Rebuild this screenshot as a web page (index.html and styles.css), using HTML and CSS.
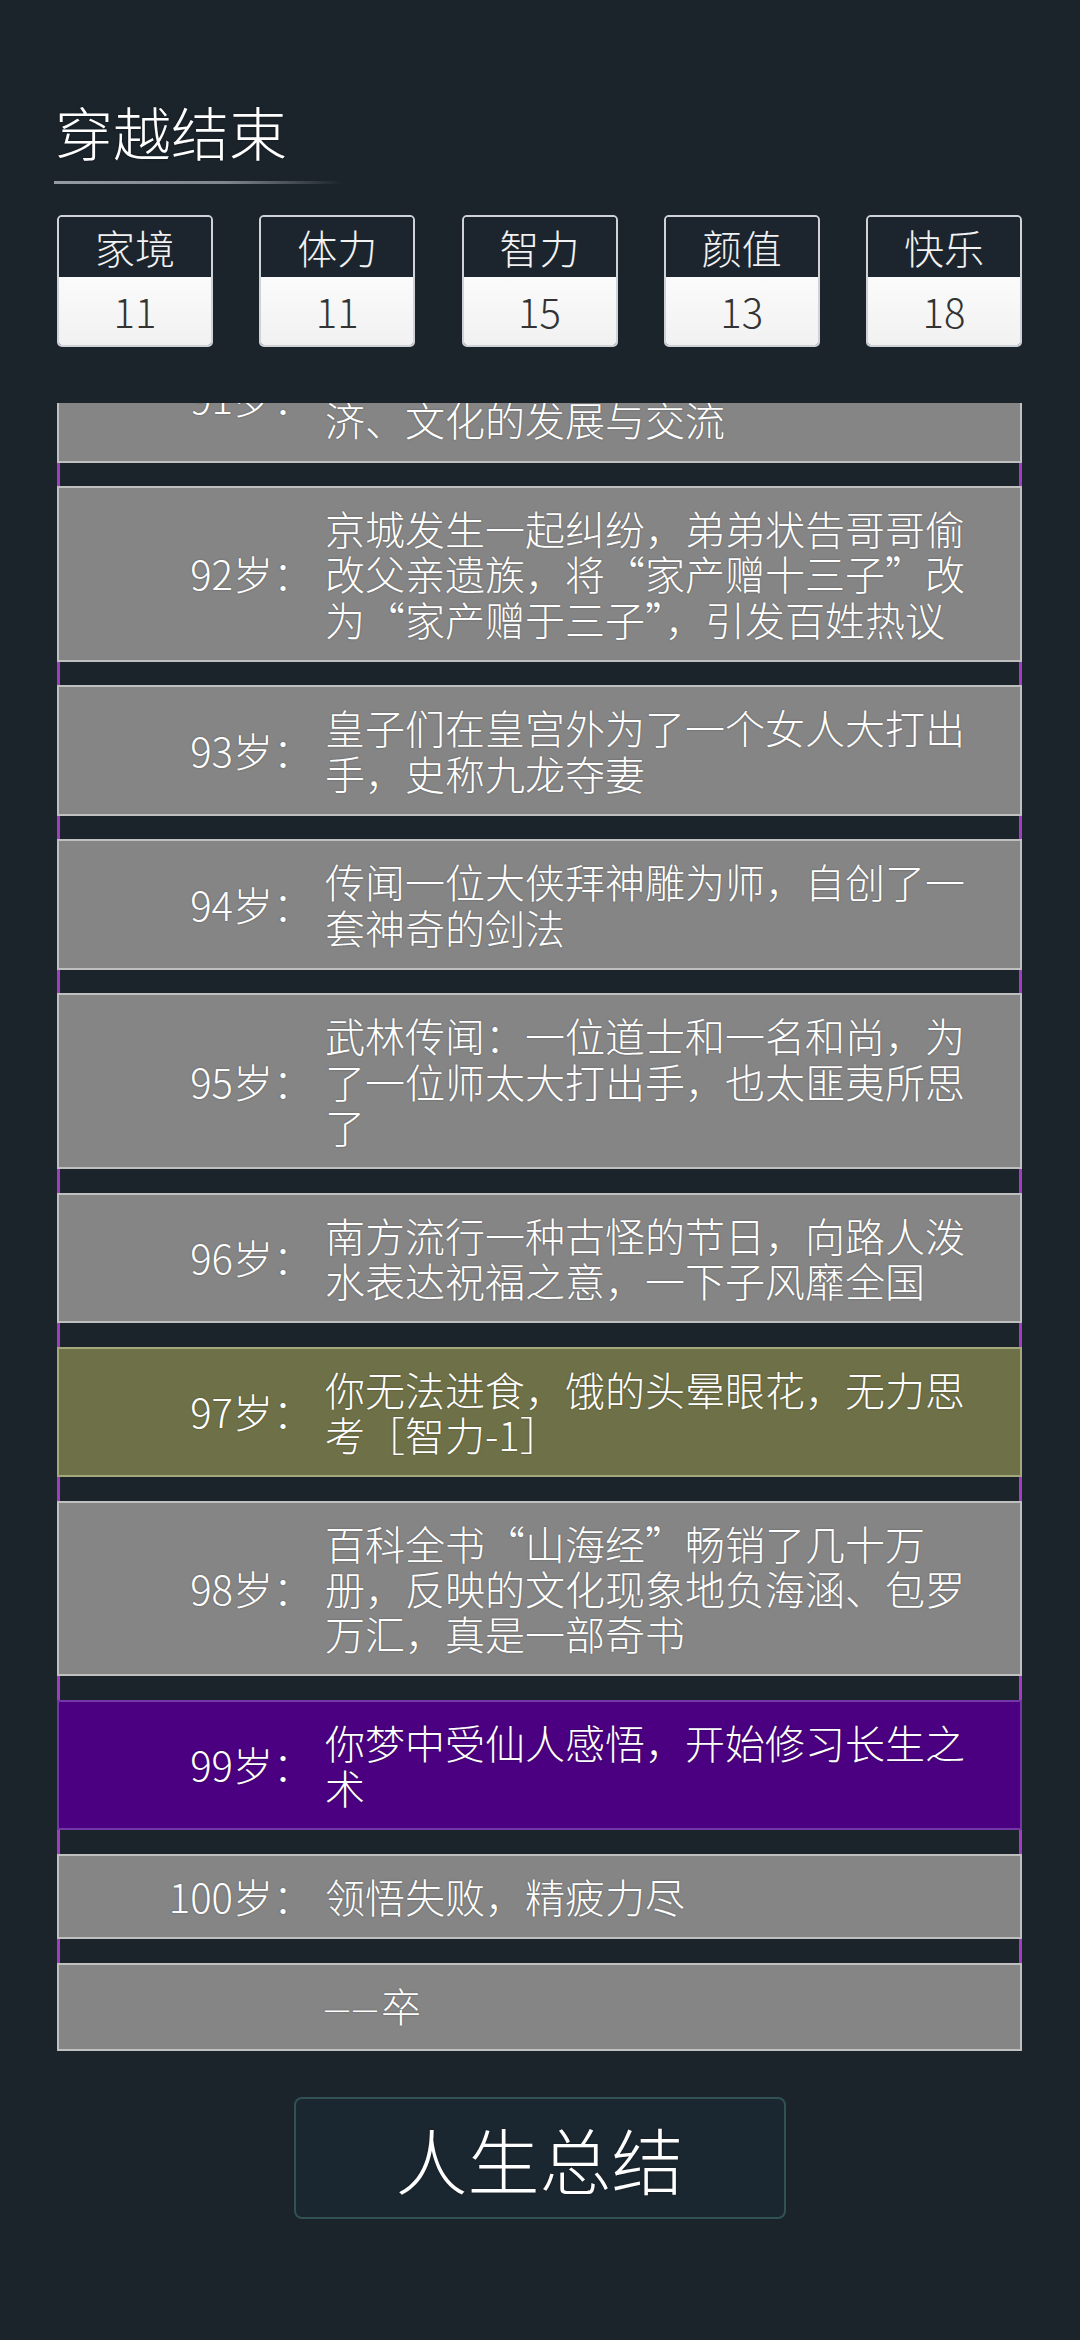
FILE: index.html
```html
<!DOCTYPE html>
<html lang="zh-CN">
<head>
<meta charset="utf-8">
<title>穿越结束</title>
<link rel="stylesheet" href="styles.css">
</head>
<body>
<div class="page">
  <h1 class="title">穿越结束</h1>
  <div class="title-line"></div>

  <div class="stats">
    <div class="stat"><div class="stat-name">家境</div><div class="stat-value">11</div></div>
    <div class="stat"><div class="stat-name">体力</div><div class="stat-value">11</div></div>
    <div class="stat"><div class="stat-name">智力</div><div class="stat-value">15</div></div>
    <div class="stat"><div class="stat-name">颜值</div><div class="stat-value">13</div></div>
    <div class="stat"><div class="stat-name">快乐</div><div class="stat-value">18</div></div>
  </div>

  <div class="list">
    <div class="item"><div class="age">89岁：</div><div class="text">你的身体每况愈下</div></div>
    <div class="item"><div class="age">90岁：</div><div class="text">邻国使节来朝，进献奇珍异宝</div></div>
    <div class="item"><div class="age">91岁：</div><div class="text">丝绸之路开辟，促进了东西方之间经济、文化的发展与交流</div></div>
    <div class="item"><div class="age">92岁：</div><div class="text">京城发生一起纠纷，弟弟状告哥哥偷改父亲遗族，将“家产赠十三子”改为“家产赠于三子”，引发百姓热议</div></div>
    <div class="item"><div class="age">93岁：</div><div class="text">皇子们在皇宫外为了一个女人大打出手，史称九龙夺妻</div></div>
    <div class="item"><div class="age">94岁：</div><div class="text">传闻一位大侠拜神雕为师，自创了一套神奇的剑法</div></div>
    <div class="item"><div class="age">95岁：</div><div class="text">武林传闻：一位道士和一名和尚，为了一位师太大打出手，也太匪夷所思了</div></div>
    <div class="item"><div class="age">96岁：</div><div class="text">南方流行一种古怪的节日，向路人泼水表达祝福之意，一下子风靡全国</div></div>
    <div class="item olive"><div class="age">97岁：</div><div class="text">你无法进食，饿的头晕眼花，无力思考［智力-1］</div></div>
    <div class="item"><div class="age">98岁：</div><div class="text">百科全书“山海经”畅销了几十万册，反映的文化现象地负海涵、包罗万汇，真是一部奇书</div></div>
    <div class="item violet"><div class="age">99岁：</div><div class="text">你梦中受仙人感悟，开始修习长生之术</div></div>
    <div class="item"><div class="age">100岁：</div><div class="text">领悟失败，精疲力尽</div></div>
    <div class="item"><div class="age"></div><div class="text"><span class="dash">——</span>卒</div></div>
  </div>

  <button class="summary" type="button">人生总结</button>
</div>
</body>
</html>
```

FILE: styles.css
```css
* {
  box-sizing: border-box;
}

html, body {
  margin: 0;
  padding: 0;
}

body {
  width: 1080px;
  height: 2340px;
  background: #1b232b;
  color: #ffffff;
  font-family: "Noto Sans CJK SC", "Noto Sans", sans-serif;
  font-weight: 300;
  overflow: hidden;
}

.page {
  padding: 89px 58px 0 57px;
  display: flex;
  flex-direction: column;
}

.title {
  margin: 0 0 0 -2px;
  font-size: 58px;
  line-height: 84px;
  font-weight: 300;
  color: #ffffff;
  text-shadow: 0 0 2px rgba(0, 0, 0, 0.5);
}

.title-line {
  margin: 8px 0 0 -3px;
  width: 288px;
  height: 3px;
  background: linear-gradient(to right, #959ba2 0%, #80868e 60%, rgba(124, 131, 139, 0) 100%);
}

.stats {
  margin-top: 31px;
  display: flex;
  justify-content: space-between;
}

.stat {
  width: 156px;
  height: 132px;
  border: 2px solid #cfd3d7;
  border-radius: 5px;
  overflow: hidden;
  display: flex;
  flex-direction: column;
}

.stat-name {
  height: 60px;
  background: #1c252e;
  display: flex;
  align-items: center;
  justify-content: center;
  font-size: 40px;
  line-height: 1.2;
  color: #f2f2f2;
}

.stat-value {
  flex: 1;
  background: linear-gradient(#fbfbfb, #f1f1f1);
  display: flex;
  align-items: center;
  justify-content: center;
  font-size: 40px;
  line-height: 1.2;
  color: #333333;
}

.list {
  margin-top: 56px;
  height: 1648px;
  overflow: hidden;
  display: flex;
  flex-direction: column;
  justify-content: flex-end;
  gap: 23.5px;
  background: linear-gradient(to right, #a23cc2 0, #a23cc2 3px, transparent 3px, transparent calc(100% - 3px), #a23cc2 calc(100% - 3px));
}

.item {
  flex-shrink: 0;
  display: flex;
  align-items: center;
  padding: 18px 0;
  background: #858585;
  border: 2px solid #c0c0c0;
  font-size: 40px;
  line-height: 45.25px;
  color: #ffffff;
  text-shadow: 0 0 2px rgba(0, 0, 0, 0.35);
}

.item.olive {
  background: #6e7047;
  border-color: #a5a87a;
}

.item.violet {
  background: #4a0080;
  border-color: #7437a8;
}

.age {
  flex-shrink: 0;
  width: 254px;
  text-align: right;
  white-space: nowrap;
}

.text {
  margin-left: 12px;
  width: 660px;
}

.dash {
  font-family: "Liberation Sans", sans-serif;
  font-size: 24px;
  letter-spacing: 4px;
  vertical-align: 0.2em;
}

.summary {
  margin: 46px auto 0;
  width: 492px;
  height: 122px;
  background: #1b2730;
  border: 2px solid #315152;
  border-radius: 8px;
  color: #ffffff;
  font-family: "Noto Sans CJK SC", "Noto Sans", sans-serif;
  font-weight: 300;
  font-size: 72px;
  line-height: 1.2;
  padding: 0;
  display: flex;
  align-items: center;
  justify-content: center;
  text-shadow: 0 0 2px rgba(0, 0, 0, 0.5);
}
```
